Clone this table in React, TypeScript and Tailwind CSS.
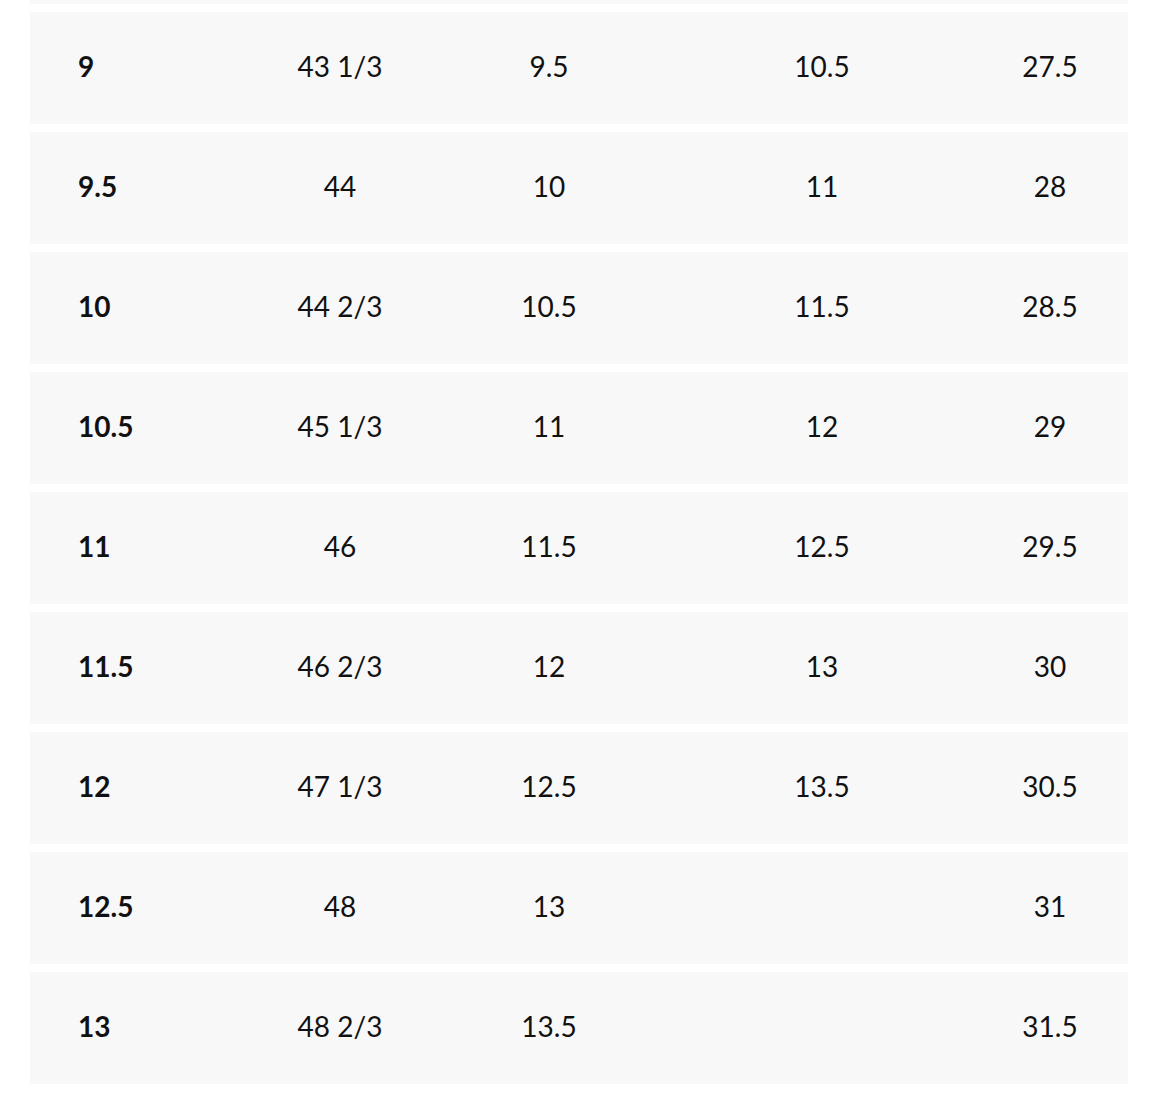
import React from 'react';

type SizeRow = [string, string, string, string, string];

const rows: SizeRow[] = [
  ['9', '43 1/3', '9.5', '10.5', '27.5'],
  ['9.5', '44', '10', '11', '28'],
  ['10', '44 2/3', '10.5', '11.5', '28.5'],
  ['10.5', '45 1/3', '11', '12', '29'],
  ['11', '46', '11.5', '12.5', '29.5'],
  ['11.5', '46 2/3', '12', '13', '30'],
  ['12', '47 1/3', '12.5', '13.5', '30.5'],
  ['12.5', '48', '13', '', '31'],
  ['13', '48 2/3', '13.5', '', '31.5'],
];

export default function App() {
  return (
    <div
      className="min-h-[1114px] bg-white pl-[30px] pr-[26px] text-[#111111]"
      style={{ fontFamily: '"Lato", "Open Sans", sans-serif' }}
    >
      {/* tail of the previous row */}
      <div className="h-[4px] bg-[#f8f8f8]" />

      <div className="flex flex-col gap-[8px] pt-[8px]">
        {rows.map((row) => (
          <div
            key={row[0]}
            className="grid h-[112px] grid-cols-[210px_200px_218px_328px_128px] items-center bg-[#f8f8f8] pb-[4px] text-[28px]"
          >
            <div className="pl-[48px] font-bold">{row[0]}</div>
            <div className="text-center">{row[1]}</div>
            <div className="text-center">{row[2]}</div>
            <div className="text-center">{row[3]}</div>
            <div className="text-center">{row[4]}</div>
          </div>
        ))}
      </div>
    </div>
  );
}
